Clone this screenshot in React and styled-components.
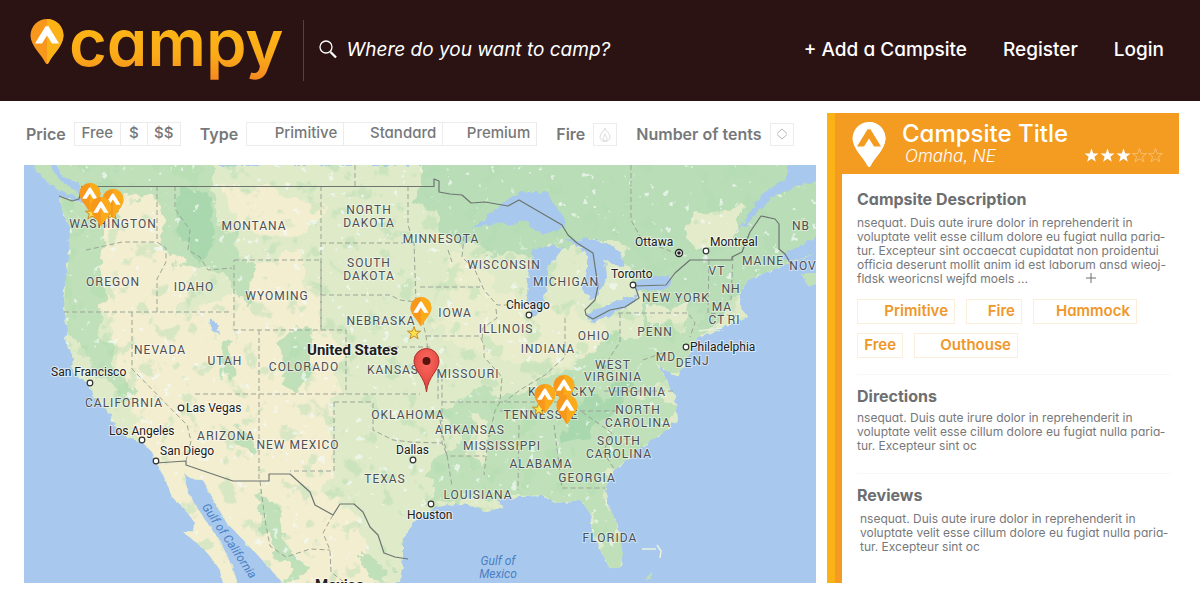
import React from 'react';
import styled, { createGlobalStyle } from 'styled-components';

const Global = createGlobalStyle`
  *, *::before, *::after { box-sizing: border-box; }
  body {
    margin: 0;
    background: #fff;
    color: #77787a;
    font-family: Inter, Lato, "Liberation Sans", sans-serif;
    font-feature-settings: "cv11", "ss03";
  }
  button, input { font: inherit; font-feature-settings: inherit; color: inherit; }
  button { cursor: pointer; }
  h1, h2, h3, p { margin: 0; }
`;

/* ---------- header ---------- */

const Header = styled.header`
  display: flex;
  align-items: center;
  height: 101px;
  padding: 0 36px 0 30px;
  background: #2b1314;
  color: #fff;
  font-size: 19px;
`;

const Brand = styled.a`
  display: flex;
  align-self: flex-start;
  align-items: flex-start;
  gap: 5px;
  padding-top: 19px;
  color: inherit;
  text-decoration: none;
`;

const Wordmark = styled.span`
  font-size: 65px;
  font-weight: 600;
  line-height: 80px;
  height: 80px;
  margin-top: -16px;
  background: linear-gradient(#fdb515 30%, #fbab18 65%, #f58a20 95%);
  background-clip: text;
  color: transparent;
`;

const Search = styled.label`
  display: flex;
  flex: 1;
  align-items: center;
  gap: 10px;
  height: 61px;
  margin-left: 19px;
  padding: 0 0 3px 15px;
  border-left: 1px solid #58403f;
`;

const SearchInput = styled.input`
  flex: 1;
  min-width: 0;
  padding: 0;
  border: 0;
  outline: 0;
  background: none;
  font-style: italic;
  &::placeholder { color: #fff; opacity: 1; }
`;

const Nav = styled.nav`
  display: flex;
  gap: 36px;
  padding-bottom: 2px;
  font-weight: 500;
`;

const NavLink = styled.a`
  color: #fff;
  text-decoration: none;
  white-space: nowrap;
`;

/* ---------- page body ---------- */

const Main = styled.main`
  display: grid;
  grid-template-columns: minmax(0, 1fr) 352px;
  gap: 11px;
  padding: 12px 21px 17px 24px;
`;

const MapColumn = styled.section`
  display: flex;
  flex-direction: column;
  gap: 19px;
  padding-top: 9px;
`;

const Filters = styled.form`
  display: flex;
  align-items: center;
  gap: 19px;
  height: 24px;
  padding-left: 2px;
  font-size: 16px;
`;

const Filter = styled.div`
  display: flex;
  align-items: center;
  gap: 8px;
`;

const FilterLabel = styled.span`
  font-weight: 600;
  white-space: nowrap;
`;

const Segments = styled.div`
  display: flex;
  border: 1px solid #ececec;
`;

const Segment = styled.button`
  width: ${(p) => p.$width}px;
  height: 22px;
  padding: 0 ${(p) => (p.$icon ? 6 : 0)}px 2px;
  border: 0;
  background: none;
  font-size: 15px;
  font-weight: 500;
  line-height: 20px;
  text-align: ${(p) => (p.$icon ? 'right' : 'center')};
  & + & { border-left: 1px solid #ececec; }
`;

const IconButton = styled.button`
  display: grid;
  place-items: center;
  width: 24px;
  height: 23px;
  padding: 0;
  border: 1px solid #ececec;
  background: none;
`;

const MapFrame = styled.svg`
  display: block;
  width: 100%;
  height: auto;
  font-family: Roboto, "Liberation Sans", sans-serif;
`;

const StateName = styled.text`
  fill: #4c5055;
  font-size: 12px;
  letter-spacing: 1px;
  text-anchor: middle;
  paint-order: stroke;
  stroke: rgba(255, 255, 255, 0.45);
  stroke-width: 2px;
`;

const CityName = styled.text`
  fill: #202020;
  font-size: 12px;
  paint-order: stroke;
  stroke: rgba(255, 255, 255, 0.6);
  stroke-width: 2px;
`;

const CountryName = styled(CityName)`
  font-size: 15px;
  font-weight: 700;
`;

const SeaName = styled.text`
  fill: #4a7fc4;
  font-size: 12px;
  font-style: italic;
  text-anchor: middle;
`;

/* ---------- campsite panel ---------- */

const Panel = styled.aside`
  display: flex;
  flex-direction: column;
  border-left: 8px solid #fbb216;
`;

const PanelHead = styled.header`
  display: flex;
  gap: 16px;
  height: 61px;
  padding: 9px 16px 7px 17px;
  background: #f49b22;
  color: #fff;
`;

const TitleBlock = styled.div`
  flex: 1;
`;

const Title = styled.h1`
  font-size: 24px;
  font-weight: 500;
  line-height: 23px;
`;

const SubRow = styled.div`
  display: flex;
  justify-content: space-between;
  align-items: center;
  padding-left: 3px;
`;

const Place = styled.p`
  font-size: 17px;
  font-style: italic;
  font-weight: 300;
  line-height: 22px;
`;

const Stars = styled.div`
  display: flex;
  gap: 1px;
  padding-bottom: 3px;
`;

const PanelBody = styled.div`
  flex: 1;
  padding: 16px 9px 0 15px;
  border-left: 7px solid #f49b22;
`;

const Block = styled.section`
  padding: ${(p) => (p.$first ? '0 0 16px' : '12px 0 20px')};
  & + & { border-top: 1px solid #f8f8f8; }
`;

const BlockTitle = styled.h2`
  color: #6d6e70;
  font-size: 16px;
  font-weight: 700;
  line-height: 18px;
`;

const Copy = styled.p`
  margin-top: ${(p) => (p.$tight ? 6 : 8)}px;
  padding-left: ${(p) => (p.$inset ? 3 : 0)}px;
  color: #77787a;
  font-size: 12px;
  font-weight: 400;
  line-height: 14px;
  white-space: nowrap;
`;

const MoreButton = styled.button`
  margin-left: 58px;
  padding: 0;
  border: 0;
  background: none;
  line-height: 10px;
`;

const Tags = styled.div`
  display: flex;
  flex-wrap: wrap;
  gap: 9px 11px;
  margin-top: 13px;
`;

const Tag = styled.button`
  width: ${(p) => p.$width}px;
  height: 25px;
  padding: 0 6px 2px;
  border: 1px solid #fbeedd;
  background: none;
  color: #f0972a;
  font-size: 15px;
  font-weight: 600;
  text-align: right;
`;

/* ---------- drawings ---------- */

const PIN = 'M15.500 44C12 36 .5 27 .5 16.500A16.500 16.500 0 0 1 33.500 16.500C33.500 27 22 36 18.500 44Q17 46 15.500 44Z';
const PIN_RIGHT = 'M17 45V0A16.500 16.500 0 0 1 33.500 16.500C33.500 27 22 36 18.500 44Q17.800 45 17 45Z';
const TENT = 'M16 6.500 17 8 18 6.500 29 24.500H22L17 16.500 12 24.500H5Z';

function PinShape({ left, right, tent }) {
  return (
    <>
      <path d={PIN} fill={left} />
      <path d={PIN_RIGHT} fill={right} />
      <path d={TENT} fill={tent} />
    </>
  );
}

function Pin({ left, right, tent }) {
  return (
    <svg width="34" height="45" viewBox="0 0 34 45" aria-hidden="true">
      <PinShape left={left} right={right} tent={tent} />
    </svg>
  );
}

const STAR = 'M7 .5 8.7 5.2H13.5L9.7 8.1 11.1 12.8 7 10 2.9 12.8 4.3 8.1.5 5.2H5.3Z';

const states = [
  ['WASHINGTON', 113, 228], ['OREGON', 113, 286], ['IDAHO', 194, 291],
  ['MONTANA', 254, 230], ['NORTH', 369, 214], ['DAKOTA', 369, 227],
  ['SOUTH', 369, 267], ['DAKOTA', 369, 280], ['WYOMING', 277, 300],
  ['NEBRASKA', 381, 325], ['NEVADA', 160, 354], ['UTAH', 225, 365],
  ['COLORADO', 304, 371], ['KANSAS', 393, 374], ['CALIFORNIA', 124, 407],
  ['ARIZONA', 226, 440], ['NEW MEXICO', 298, 449], ['OKLAHOMA', 408, 419],
  ['TEXAS', 385, 483], ['MINNESOTA', 441, 243], ['WISCONSIN', 504, 269],
  ['MICHIGAN', 566, 286], ['IOWA', 455, 317], ['ILLINOIS', 506, 333],
  ['INDIANA', 548, 353], ['OHIO', 594, 340], ['PENN', 655, 336],
  ['MISSOURI', 468, 378], ['WEST', 613, 369], ['VIRGINIA', 613, 381],
  ['KENTUCKY', 562, 396], ['VIRGINIA', 637, 396], ['TENNESSEE', 541, 419],
  ['NORTH', 638, 414], ['CAROLINA', 638, 427], ['ARKANSAS', 470, 434],
  ['MISSISSIPPI', 502, 450], ['SOUTH', 619, 445], ['CAROLINA', 619, 458],
  ['ALABAMA', 541, 468], ['GEORGIA', 587, 482], ['LOUISIANA', 478, 499],
  ['FLORIDA', 610, 542], ['NEW YORK', 676, 302], ['VT', 717, 275],
  ['NH', 731, 293], ['MA', 722, 311], ['CT', 717, 324], ['RI', 734, 324],
  ['MAINE', 763, 265], ['NB', 801, 230], ['NOV', 803, 270],
  ['MD', 666, 361], ['DE', 684, 367], ['NJ', 701, 365],
];

const cities = [
  ['San Francisco', 51, 376, 90, 383], ['Las Vegas', 186, 412, 181, 408],
  ['Los Angeles', 109, 435, 142, 440], ['San Diego', 160, 455, 156, 461],
  ['Dallas', 396, 454, 413, 460], ['Houston', 407, 519, 431, 504],
  ['Chicago', 506, 309, 529, 315], ['Toronto', 611, 278, 633, 285],
  ['Montreal', 710, 246, 706, 251], ['Philadelphia', 690, 351, 686, 347],
];

const LAND =
  'M57 165 63 177 78 182 83 192 91 200 86 206 80 203 59 196 63 213 70 227 69 257 65 287 64 310 68 330 65 342 72 353 73 373 88 383 92 393 108 413 115 427 128 438 142 442 153 453 157 463 167 483 172 497 183 507 195 523 193 532 183 532 202 547 213 560 220 570 223 583H237L228 557 217 537 203 517 188 493 184 473 190 478 203 480 210 493 227 523 253 550 273 572 283 583H400L403 557 403 540 413 523 437 507 455 504 470 505 487 512 503 508 497 500 520 496 543 495 557 503 580 500 590 513 592 533 600 550 610 568 620 568 623 553 617 523 607 503 606 487 615 470 637 450 653 440 668 428 678 420 675 397 665 377 655 362 668 372 677 377 687 360 697 337 723 330 712 330 737 323 748 317 740 307 740 293 748 280 767 272 790 263 816 253V165Z';

const borders = [
  'M82 186.500H434V179L439 181V192L450 194 462 195 471 203 485 202 508 206 519 200 562 225 568 235 577 243 593 253 598 286 595 300 585 310 586 315 593 319 610 310 625 307 639 298 635 286 666 285 675 273 690 260H732V257L742 252 750 232 761 216 775 219 779 224 779 249 785 254 791 264',
  'M156 463 186 461V465L233 481H269V474H290L310 492 315 505 333 515 340 504 354 504 363 512 370 527 378 535 384 553 395 557 408 559',
  'M59 196 72 201 79 199 82 186',
];

const dashes =
  'M86 250 100 247 122 242H157L166 248V262L157 279V312M64 312H232M157 186V242M175 186V209L190 230 188 250 200 257 208 270 232 268M234 260H321V330H234V260M321 186V330H346V394M259 330V481M195 394H420M321 243H415M321 295H390L400 300 416 302M346 347H430M334 402V471H290M334 402H373V430L393 440 410 442 442 443M132 312V369L187 425 191 441 186 461M408 186V225L414 243 416 302 421 313 426 336 430 366 442 374V443L447 455 452 486M426 336H480L484 345 484 357 502 377 500 402 495 411 488 440 484 475M442 402H560M438 378V402M420 287H480M496 309 497 318 483 328 482 340M464 236 462 257 475 270 484 290 497 305H530M565 318V357L545 375 520 390 504 402M500 411H620M519 425 518 490M554 425 562 488H605M620 313V342L610 357 600 378M618 313H688L695 323 690 337M643 360 665 352M631 165V220L642 240 680 255M709 260 708 313 738 316M733 256 731 300M604 391H676M582 412 612 433 603 452 615 470M440 420 447 456H485M333 515 323 533 330 550 331 572 345 583M260 481 265 520 270 546 286 557 310 549 330 550M355 165V186M448 250 452 262';

function UsMap() {
  const sitePins = [[90, 200], [113, 206], [101, 214], [421, 314], [545, 401], [564, 392], [567, 412]];
  return (
    <MapFrame viewBox="24 165 792 418" role="img" aria-label="Map of campsites in the United States">
      <defs>
        <clipPath id="land"><path d={LAND} /></clipPath>
        <filter id="ragged" x="-10%" y="-10%" width="120%" height="120%">
          <feTurbulence type="fractalNoise" baseFrequency="0.045" numOctaves="4" seed="4" />
          <feDisplacementMap in="SourceGraphic" scale="30" xChannelSelector="R" yChannelSelector="G" />
        </filter>
        <filter id="coast">
          <feTurbulence type="fractalNoise" baseFrequency="0.16" numOctaves="2" seed="8" />
          <feDisplacementMap in="SourceGraphic" scale="7" xChannelSelector="R" yChannelSelector="G" />
        </filter>
        <filter id="woods" x="0" y="0" width="100%" height="100%" colorInterpolationFilters="sRGB">
          <feTurbulence type="fractalNoise" baseFrequency="0.05" numOctaves="4" seed="12" />
          <feColorMatrix values="0 0 0 0 0.69  0 0 0 0 0.86  0 0 0 0 0.69  0 12 0 0 -7.3" />
          <feComposite in2="SourceGraphic" operator="in" />
        </filter>
        <filter id="specks" x="0" y="0" width="100%" height="100%" colorInterpolationFilters="sRGB">
          <feTurbulence type="fractalNoise" baseFrequency="0.11" numOctaves="3" seed="31" />
          <feColorMatrix values="0 0 0 0 0.95  0 0 0 0 0.98  0 0 0 0 0.96  14 0 0 0 -9.8" />
          <feComposite in2="SourceGraphic" operator="in" />
        </filter>
        <radialGradient id="redPin" cx="0.5" cy="0.3" r="0.6">
          <stop offset="0" stopColor="#fb6a60" />
          <stop offset="1" stopColor="#e2453e" />
        </radialGradient>
        <g id="sitePin" transform="translate(-11 -17) scale(.640)">
          <PinShape left="#f7981d" right="#fbaa19" tent="#fff" />
        </g>
      </defs>

      <rect x="24" y="165" width="792" height="418" fill="#a8c9ed" />
      <g filter="url(#coast)"><path d={LAND} fill="#deeac8" /></g>

      <g clipPath="url(#land)">
        <g filter="url(#ragged)">
          <path fill="#f4eed1" d="M100 205 165 190 165 250 200 260 170 320 230 300 235 260 300 255 330 335 345 345 330 400 335 480 320 490 350 510 385 610 225 610 150 470 130 400 115 340 95 290Z" />
          <path fill="#f4eed1" d="M225 185 270 190 320 210 300 235 240 235Z" />
          <path fill="#bfe0b8" d="M60 150 105 150 110 220 102 270 98 310 115 360 135 400 125 400 95 365 70 340 60 290 65 220Z" />
          <path fill="#bfe0b8" d="M95 145 210 145 220 220 245 260 250 300 235 305 215 260 190 275 170 260 160 200 110 195Z" />
          <path fill="#bfe0b8" d="M238 268 255 260 254 295 242 310ZM275 335 312 330 308 380 298 400 284 380ZM224 345 236 340 230 370 220 380ZM235 430 262 450 255 460 228 440ZM262 490 278 510 302 570 290 580 264 530ZM358 545 388 570 380 585 358 560Z" />
          <path fill="#b9ddb7" d="M430 145 840 145 840 215 790 290 730 300 700 340 650 350 640 300 620 240 560 240 540 260 490 255 440 230 415 195Z" />
          <path fill="#bfe0b8" d="M440 410 480 390 520 395 600 340 660 330 700 300 700 350 640 400 690 400 650 450 610 480 610 510 590 510 520 500 430 505 430 470 460 440Z" />
          <path fill="#bfe0b8" d="M590 500 615 500 628 570 600 570Z" />
          <path fill="#a9d7ae" d="M560 425 630 375 640 385 590 430 565 440ZM175 195 210 190 215 240 202 262 182 240Z" />
          <path fill="#e9edcc" d="M455 250 500 290 560 310 610 320 600 345 560 360 500 365 440 330Z" />
          <path fill="#e4ebca" d="M645 310 685 305 690 325 650 330ZM470 415 488 422 480 470 468 450ZM690 215 750 205 730 245 695 250Z" />
        </g>
        <rect x="24" y="165" width="792" height="418" opacity=".4" filter="url(#woods)" />
        <rect x="24" y="165" width="792" height="418" opacity=".7" filter="url(#specks)" />
      </g>

      <g filter="url(#coast)" fill="#a8c9ed">
        <path d="M473 228 503 203 520 192 547 192 553 203 565 217 563 228 553 233 537 232 523 220 513 225 497 223Z" />
        <path d="M533 250 553 245 563 248 547 270 545 293 542 310 533 317 527 300 528 277Z" />
        <path d="M567 240 587 238 607 243 620 253 625 267 613 265 605 260 607 277 597 297 590 300 583 290 587 270 587 253Z" />
        <path d="M585 315 600 308 620 300 638 295 633 303 610 315 593 323Z" />
        <path d="M630 285 647 278 670 275 672 285 663 290 637 290Z" />
        <path d="M787 160H826V182L797 185 773 197 757 213 735 234 753 208 767 190 787 178Z" />
        <path d="M209 319 217 323 219 334 212 331Z" />
        <path d="M780 256 826 232V248L792 262Z" />
      </g>
      <g filter="url(#coast)" fill="#bfe0b8">
        <path d="M30 160H46L60 180 78 192 76 198 58 190 42 178Z" />
        <path d="M800 273H826V286L808 285Z" />
        <path d="M646 578 652 572 653 580Z" />
      </g>
      <path d="M642 549h14M657 545l4 6-1 7M699 331l23-3" stroke="#e8f2dc" strokeWidth="1.500" fill="none" />

      <path d={dashes} fill="none" stroke="#9aa596" strokeWidth="1" strokeDasharray="5 3" />
      {borders.map((d) => (
        <path key={d} d={d} fill="none" stroke="#6c7570" strokeWidth="1.200" strokeLinejoin="round" />
      ))}

      {states.map(([name, x, y]) => (
        <StateName key={name + x + y} x={x} y={y}>{name}</StateName>
      ))}
      {cities.map(([name, x, y, cx, cy]) => (
        <g key={name}>
          <circle cx={cx} cy={cy} r="2.800" fill="#fff" stroke="#333" strokeWidth="1.200" />
          <CityName x={x} y={y}>{name}</CityName>
        </g>
      ))}
      <circle cx="679" cy="253" r="3.500" fill="#fff" stroke="#222" strokeWidth="1.300" />
      <circle cx="679" cy="253" r="1.800" fill="#222" />
      <CityName x="635" y="246">Ottawa</CityName>
      <CountryName x="307" y="355">United States</CountryName>
      <CountryName x="315" y="590">Mexico</CountryName>
      <SeaName x="498" y="565">Gulf of</SeaName>
      <SeaName x="498" y="578">Mexico</SeaName>
      <SeaName transform="translate(226 543) rotate(56)">Gulf of California</SeaName>

      {[[85, 206], [105, 206], [407, 326], [532, 402]].map(([x, y]) => (
        <path key={x} d={STAR} transform={`translate(${x} ${y})`} fill="#fce14b" stroke="#c98a25" />
      ))}
      {sitePins.map(([x, y]) => (
        <use key={x} href="#sitePin" x={x} y={y} />
      ))}
      <path d="M426.500 392C425 376 414 371 414 361A12.500 12.500 0 0 1 439 361C439 371 428 376 426.500 392Z" fill="url(#redPin)" stroke="#a8322c" />
      <circle cx="426.500" cy="361" r="4" fill="#5a1410" />
    </MapFrame>
  );
}

const excerpt = (
  <>
    nsequat. Duis aute irure dolor in reprehenderit in<br />
    voluptate velit esse cillum dolore eu fugiat nulla paria-<br />
  </>
);

export default function App() {
  return (
    <>
      <Global />
      <Header>
        <Brand href="#" aria-label="campy">
          <Pin left="#f7981d" right="#fbb216" tent="#fff" />
          <Wordmark>campy</Wordmark>
        </Brand>
        <Search>
          <svg width="18" height="19" viewBox="0 0 18 19" fill="none" stroke="#fff" aria-hidden="true">
            <circle cx="7" cy="7" r="6" strokeWidth="1.300" />
            <path d="M11.500 12 17 17.500" strokeWidth="2.300" />
          </svg>
          <SearchInput type="search" aria-label="Search campsites" placeholder="Where do you want to camp?" />
        </Search>
        <Nav>
          <NavLink href="#add">+ Add a Campsite</NavLink>
          <NavLink href="#register">Register</NavLink>
          <NavLink href="#login">Login</NavLink>
        </Nav>
      </Header>

      <Main>
        <MapColumn>
          <Filters>
            <Filter>
              <FilterLabel>Price</FilterLabel>
              <Segments role="group" aria-label="Price">
                <Segment type="button" $width={45}>Free</Segment>
                <Segment type="button" $width={27}>$</Segment>
                <Segment type="button" $width={33}>$$</Segment>
              </Segments>
            </Filter>
            <Filter>
              <FilterLabel>Type</FilterLabel>
              <Segments role="group" aria-label="Type">
                <Segment type="button" $icon $width={96}>Primitive</Segment>
                <Segment type="button" $icon $width={99}>Standard</Segment>
                <Segment type="button" $icon $width={94}>Premium</Segment>
              </Segments>
            </Filter>
            <Filter>
              <FilterLabel id="fire">Fire</FilterLabel>
              <IconButton type="button" aria-labelledby="fire">
                <svg width="12" height="15" viewBox="0 0 12 15" fill="none" stroke="#dcdcdc" aria-hidden="true">
                  <path d="M6 1C6.500 4 11 6 11 10A5 4.500 0 0 1 1 10C1 6 5.500 4 6 1Z" />
                  <path d="M6 7C6 9 8 10 8 12A2 2 0 0 1 4 12C4 10 6 9 6 7Z" />
                </svg>
              </IconButton>
            </Filter>
            <Filter>
              <FilterLabel id="tents">Number of tents</FilterLabel>
              <IconButton type="button" aria-labelledby="tents">
                <svg width="12" height="12" viewBox="0 0 12 12" fill="none" stroke="#b9b9b9" aria-hidden="true">
                  <path d="M1 5.500 6 1 11 5.500M1 6.500 6 11 11 6.500" />
                </svg>
              </IconButton>
            </Filter>
          </Filters>
          <UsMap />
        </MapColumn>

        <Panel>
          <PanelHead>
            <Pin left="#fff" right="#fff" tent="#f49b22" />
            <TitleBlock>
              <Title>Campsite Title</Title>
              <SubRow>
                <Place>Omaha, NE</Place>
                <Stars role="img" aria-label="3 of 5 stars">
                  {[1, 2, 3, 4, 5].map((n) => (
                    <svg key={n} width="15" height="14" viewBox="0 0 14 13">
                      <path d={STAR} fill={n <= 3 ? '#fff' : 'none'} stroke={n <= 3 ? 'none' : '#f9c986'} strokeWidth=".700" />
                    </svg>
                  ))}
                </Stars>
              </SubRow>
            </TitleBlock>
          </PanelHead>
          <PanelBody>
            <Block $first>
              <BlockTitle>Campsite Description</BlockTitle>
              <Copy>
                {excerpt}
                tur. Excepteur sint occaecat cupidatat non proidentui<br />
                officia deserunt mollit anim id est laborum ansd wieoj-<br />
                fldsk weoricnsl wejfd moels ...
                <MoreButton type="button" aria-label="Read more">
                  <svg width="10" height="10" viewBox="0 0 10 10" stroke="#6d6e70" aria-hidden="true">
                    <path d="M5 0V10M0 5H10" />
                  </svg>
                </MoreButton>
              </Copy>
              <Tags>
                <Tag type="button" $width={98}>Primitive</Tag>
                <Tag type="button" $width={56}>Fire</Tag>
                <Tag type="button" $width={104}>Hammock</Tag>
                <Tag type="button" $width={46}>Free</Tag>
                <Tag type="button" $width={104}>Outhouse</Tag>
              </Tags>
            </Block>
            <Block>
              <BlockTitle>Directions</BlockTitle>
              <Copy $tight>{excerpt}tur. Excepteur sint oc</Copy>
            </Block>
            <Block>
              <BlockTitle>Reviews</BlockTitle>
              <Copy $inset>{excerpt}tur. Excepteur sint oc</Copy>
            </Block>
          </PanelBody>
        </Panel>
      </Main>
    </>
  );
}
